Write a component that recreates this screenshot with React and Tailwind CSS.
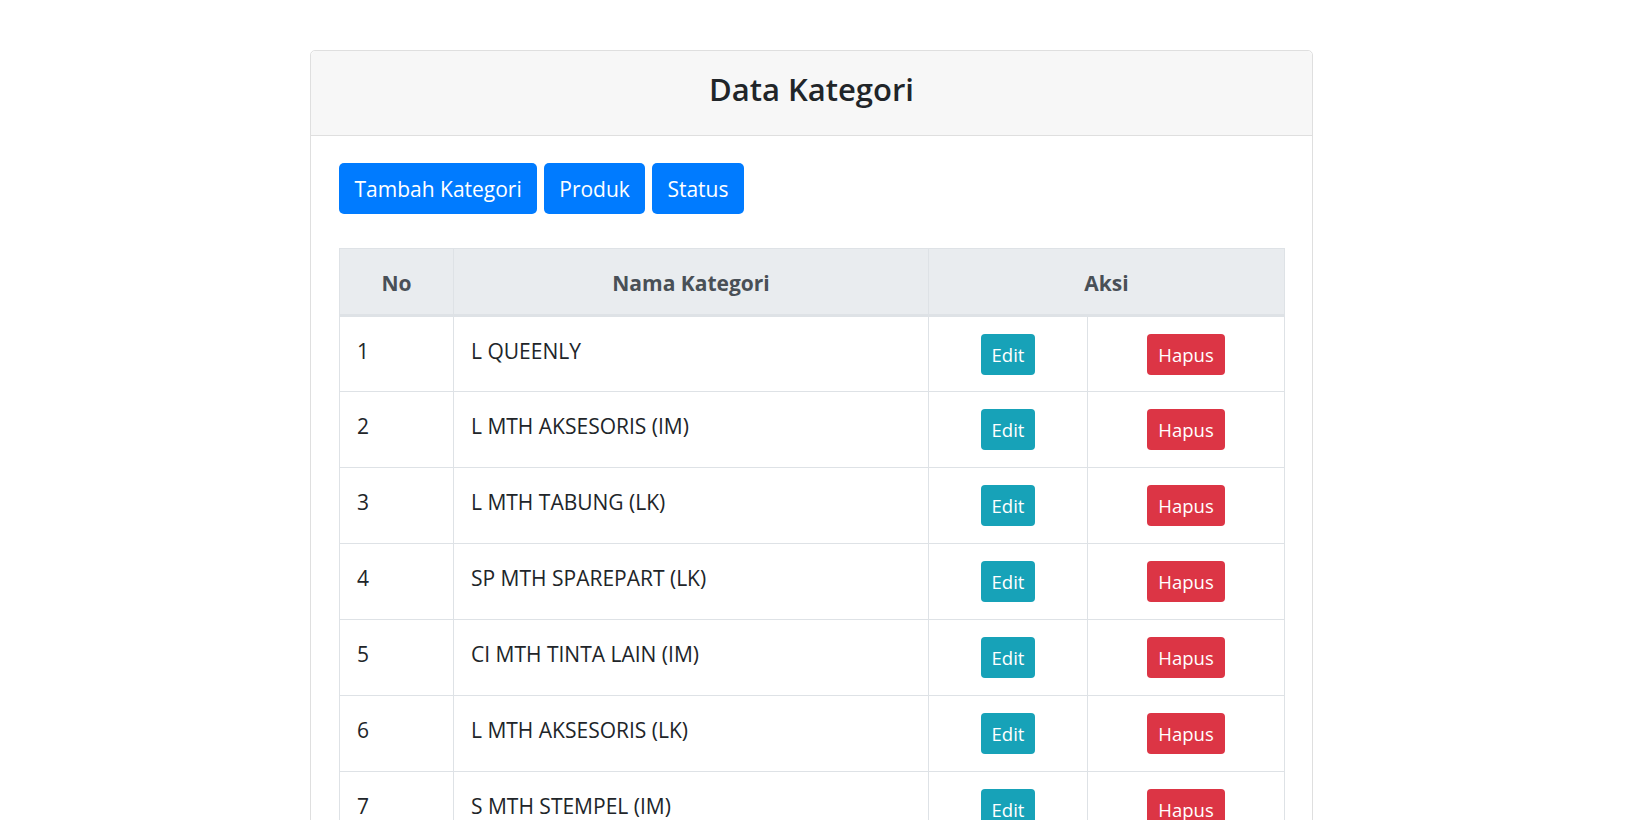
const rows = [
  "L QUEENLY",
  "L MTH AKSESORIS (IM)",
  "L MTH TABUNG (LK)",
  "SP MTH SPAREPART (LK)",
  "CI MTH TINTA LAIN (IM)",
  "L MTH AKSESORIS (LK)",
  "S MTH STEMPEL (IM)",
];

function TopButton({ children }) {
  return (
    <button className="h-[51px] rounded-[5px] bg-[#007bff] px-[15.5px] text-[21px] leading-[32px] text-white">
      {children}
    </button>
  );
}

export default function App() {
  return (
    <div className="min-h-screen bg-white pt-[50px] text-[#212529]" style={{ fontFamily: '"Open Sans", "Noto Sans", sans-serif' }}>
      <div className="ml-[310px] w-[1003px] rounded-[5px] border border-[#dfdfdf]">
        <div className="rounded-t-[5px] border-b border-[#dfdfdf] bg-[#f7f7f7] pt-4 pb-6 text-center">
          <h3 className="text-[31px] font-semibold leading-[44px]">Data Kategori</h3>
        </div>

        <div className="px-[28px] pt-[27px]">
          <div className="flex gap-[6.5px]">
            <TopButton>Tambah Kategori</TopButton>
            <TopButton>Produk</TopButton>
            <TopButton>Status</TopButton>
          </div>

          <table className="mt-[34px] w-[945px] table-fixed border-collapse border border-[#dee2e6] text-[21px] leading-[32px]">
            <colgroup>
              <col className="w-[114px]" />
              <col className="w-[475px]" />
              <col className="w-[159px]" />
              <col className="w-[197px]" />
            </colgroup>
            <thead>
              <tr className="bg-[#e9ecef] text-[#495057]">
                <th className="border border-b-[3px] border-[#dee2e6] px-[17px] pt-[18px] pb-[15px] text-center font-bold">No</th>
                <th className="border border-b-[3px] border-[#dee2e6] px-[17px] pt-[18px] pb-[15px] text-center font-bold">Nama Kategori</th>
                <th colSpan={2} className="border border-b-[3px] border-[#dee2e6] px-[17px] pt-[18px] pb-[15px] text-center font-bold">Aksi</th>
              </tr>
            </thead>
            <tbody>
              {rows.map((name, i) => (
                <tr key={name} className="h-[76px]">
                  <td className="border border-[#dee2e6] px-[17px] pt-[18px] align-top">{i + 1}</td>
                  <td className="border border-[#dee2e6] px-[17px] pt-[18px] align-top">{name}</td>
                  <td className="border border-[#dee2e6] pt-[17px] text-center align-top">
                    <button className="h-[41px] rounded-[4px] bg-[#17a2b8] px-[11px] text-[18.5px] leading-[28px] text-white">Edit</button>
                  </td>
                  <td className="border border-[#dee2e6] pt-[17px] text-center align-top">
                    <button className="h-[41px] rounded-[4px] bg-[#dc3545] px-[11px] text-[18.5px] leading-[28px] text-white">Hapus</button>
                  </td>
                </tr>
              ))}
            </tbody>
          </table>
        </div>
      </div>
    </div>
  );
}
